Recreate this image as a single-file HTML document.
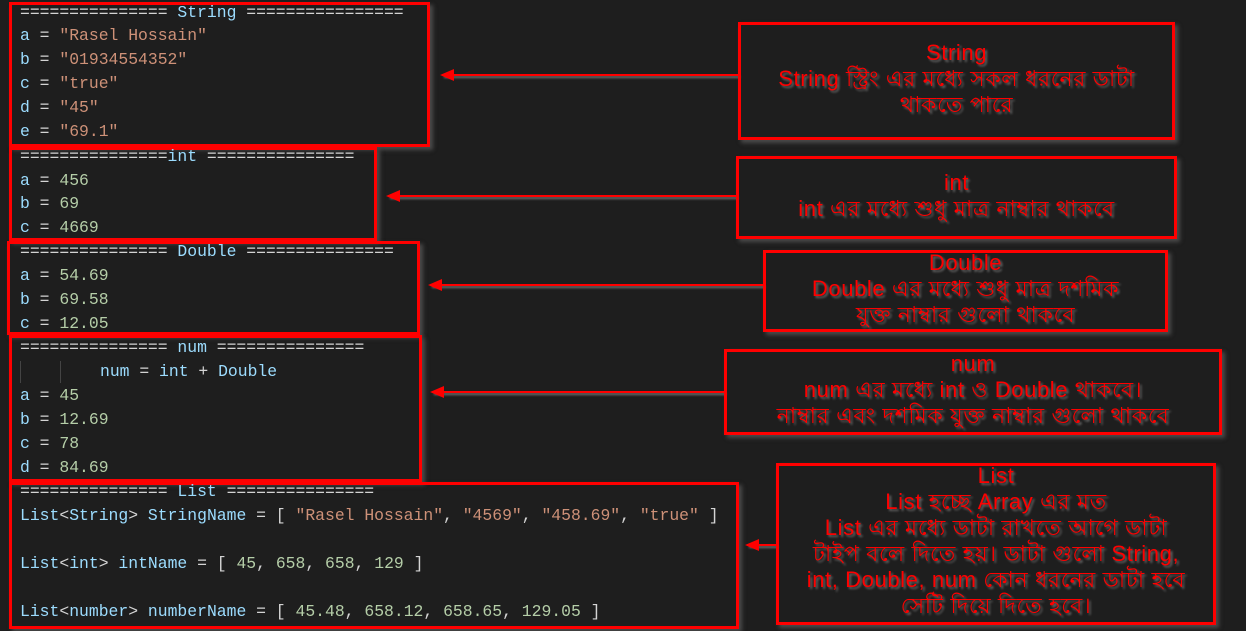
<!DOCTYPE html>
<html><head><meta charset="utf-8"><style>
body{margin:0;width:1246px;height:631px;background:#1e1e1e;position:relative;overflow:hidden}
.box{position:absolute;border:3px solid #f00;box-sizing:border-box;box-shadow:3px 3px 4px rgba(120,120,120,.5)}
.l{position:absolute;left:20px;font:16.4px/24px "Liberation Mono",monospace;color:#d4d4d4;white-space:pre}
.v{color:#9cdcfe}.s{color:#ce9178}.n{color:#b5cea8}
.t{position:absolute;text-align:center;color:#f00;font:22px/26px "Liberation Sans","Noto Sans CJK SC",sans-serif;letter-spacing:0.6px;text-shadow:2px 2px 2px #666;white-space:nowrap}
.ar{position:absolute;height:2px;background:#f00;box-shadow:2px 2px 2px #777}
.ar:before{content:"";position:absolute;left:-2px;top:-5px;border-right:14px solid #f00;border-top:6px solid transparent;border-bottom:6px solid transparent}
</style></head><body>
<div class="box" style="left:9px;top:2px;width:421px;height:145px"></div>
<div class="l" style="top:1px">=============== <span class="v">String</span> ================</div>
<div class="l" style="top:24px"><span class="v">a</span> = <span class="s">"Rasel Hossain"</span></div>
<div class="l" style="top:48px"><span class="v">b</span> = <span class="s">"01934554352"</span></div>
<div class="l" style="top:72px"><span class="v">c</span> = <span class="s">"true"</span></div>
<div class="l" style="top:96px"><span class="v">d</span> = <span class="s">"45"</span></div>
<div class="l" style="top:120px"><span class="v">e</span> = <span class="s">"69.1"</span></div>

<div class="box" style="left:9px;top:147px;width:368px;height:94px"></div>
<div class="l" style="top:145px">===============<span class="v">int</span> ===============</div>
<div class="l" style="top:169px"><span class="v">a</span> = <span class="n">456</span></div>
<div class="l" style="top:192px"><span class="v">b</span> = <span class="n">69</span></div>
<div class="l" style="top:216px"><span class="v">c</span> = <span class="n">4669</span></div>

<div class="box" style="left:7px;top:241px;width:413px;height:94px"></div>
<div class="l" style="top:240px">=============== <span class="v">Double</span> ===============</div>
<div class="l" style="top:264px"><span class="v">a</span> = <span class="n">54.69</span></div>
<div class="l" style="top:288px"><span class="v">b</span> = <span class="n">69.58</span></div>
<div class="l" style="top:312px"><span class="v">c</span> = <span class="n">12.05</span></div>

<div class="box" style="left:9px;top:335px;width:413px;height:147px"></div>
<div class="l" style="top:336px">=============== <span class="v">num</span> ===============</div>
<div style="position:absolute;left:20px;top:361px;width:1px;height:22px;background:#444"></div>
<div style="position:absolute;left:60px;top:361px;width:1px;height:22px;background:#444"></div>
<div class="l" style="top:360px;left:100px"><span class="v">num</span> = <span class="v">int</span> + <span class="v">Double</span></div>
<div class="l" style="top:384px"><span class="v">a</span> = <span class="n">45</span></div>
<div class="l" style="top:408px"><span class="v">b</span> = <span class="n">12.69</span></div>
<div class="l" style="top:432px"><span class="v">c</span> = <span class="n">78</span></div>
<div class="l" style="top:456px"><span class="v">d</span> = <span class="n">84.69</span></div>

<div class="box" style="left:9px;top:482px;width:730px;height:147px"></div>
<div class="l" style="top:480px">=============== <span class="v">List</span> ===============</div>
<div class="l" style="top:504px"><span class="v">List</span>&lt;<span class="v">String</span>&gt; <span class="v">StringName</span> = [ <span class="s">"Rasel Hossain"</span>, <span class="s">"4569"</span>, <span class="s">"458.69"</span>, <span class="s">"true"</span> ]</div>
<div class="l" style="top:552px"><span class="v">List</span>&lt;<span class="v">int</span>&gt; <span class="v">intName</span> = [ <span class="n">45</span>, <span class="n">658</span>, <span class="n">658</span>, <span class="n">129</span> ]</div>
<div class="l" style="top:600px"><span class="v">List</span>&lt;<span class="v">number</span>&gt; <span class="v">numberName</span> = [ <span class="n">45.48</span>, <span class="n">658.12</span>, <span class="n">658.65</span>, <span class="n">129.05</span> ]</div>

<div class="ar" style="left:442px;top:74px;width:296px"></div>
<div class="ar" style="left:388px;top:195px;width:348px"></div>
<div class="ar" style="left:430px;top:284px;width:333px"></div>
<div class="ar" style="left:432px;top:391px;width:292px"></div>
<div class="ar" style="left:747px;top:544px;width:29px"></div>

<div class="box" style="left:738px;top:22px;width:437px;height:118px"></div>
<div class="t" style="left:738px;width:437px;top:40px">String<br>String স্ট্রিং এর মধ্যে সকল ধরনের ডাটা<br>থাকতে পারে</div>
<div class="box" style="left:736px;top:156px;width:441px;height:83px"></div>
<div class="t" style="left:736px;width:441px;top:170px">int<br>int এর মধ্যে শুধু মাত্র নাম্বার থাকবে</div>
<div class="box" style="left:763px;top:250px;width:405px;height:82px"></div>
<div class="t" style="left:763px;width:405px;top:250px">Double<br>Double এর মধ্যে শুধু মাত্র দশমিক<br>যুক্ত নাম্বার গুলো থাকবে</div>
<div class="box" style="left:724px;top:349px;width:498px;height:86px"></div>
<div class="t" style="left:724px;width:498px;top:351px">num<br>num এর মধ্যে int ও Double থাকবে।<br>নাম্বার এবং দশমিক যুক্ত নাম্বার গুলো থাকবে</div>
<div class="box" style="left:776px;top:463px;width:440px;height:162px"></div>
<div class="t" style="left:776px;width:440px;top:463px">List<br>List হচ্ছে Array এর মত<br>List এর মধ্যে ডাটা রাখতে আগে ডাটা<br>টাইপ বলে দিতে হয়। ডাটা গুলো String,<br>int, Double, num কোন ধরনের ডাটা হবে<br>সেটি দিয়ে দিতে হবে।</div>
</body></html>
